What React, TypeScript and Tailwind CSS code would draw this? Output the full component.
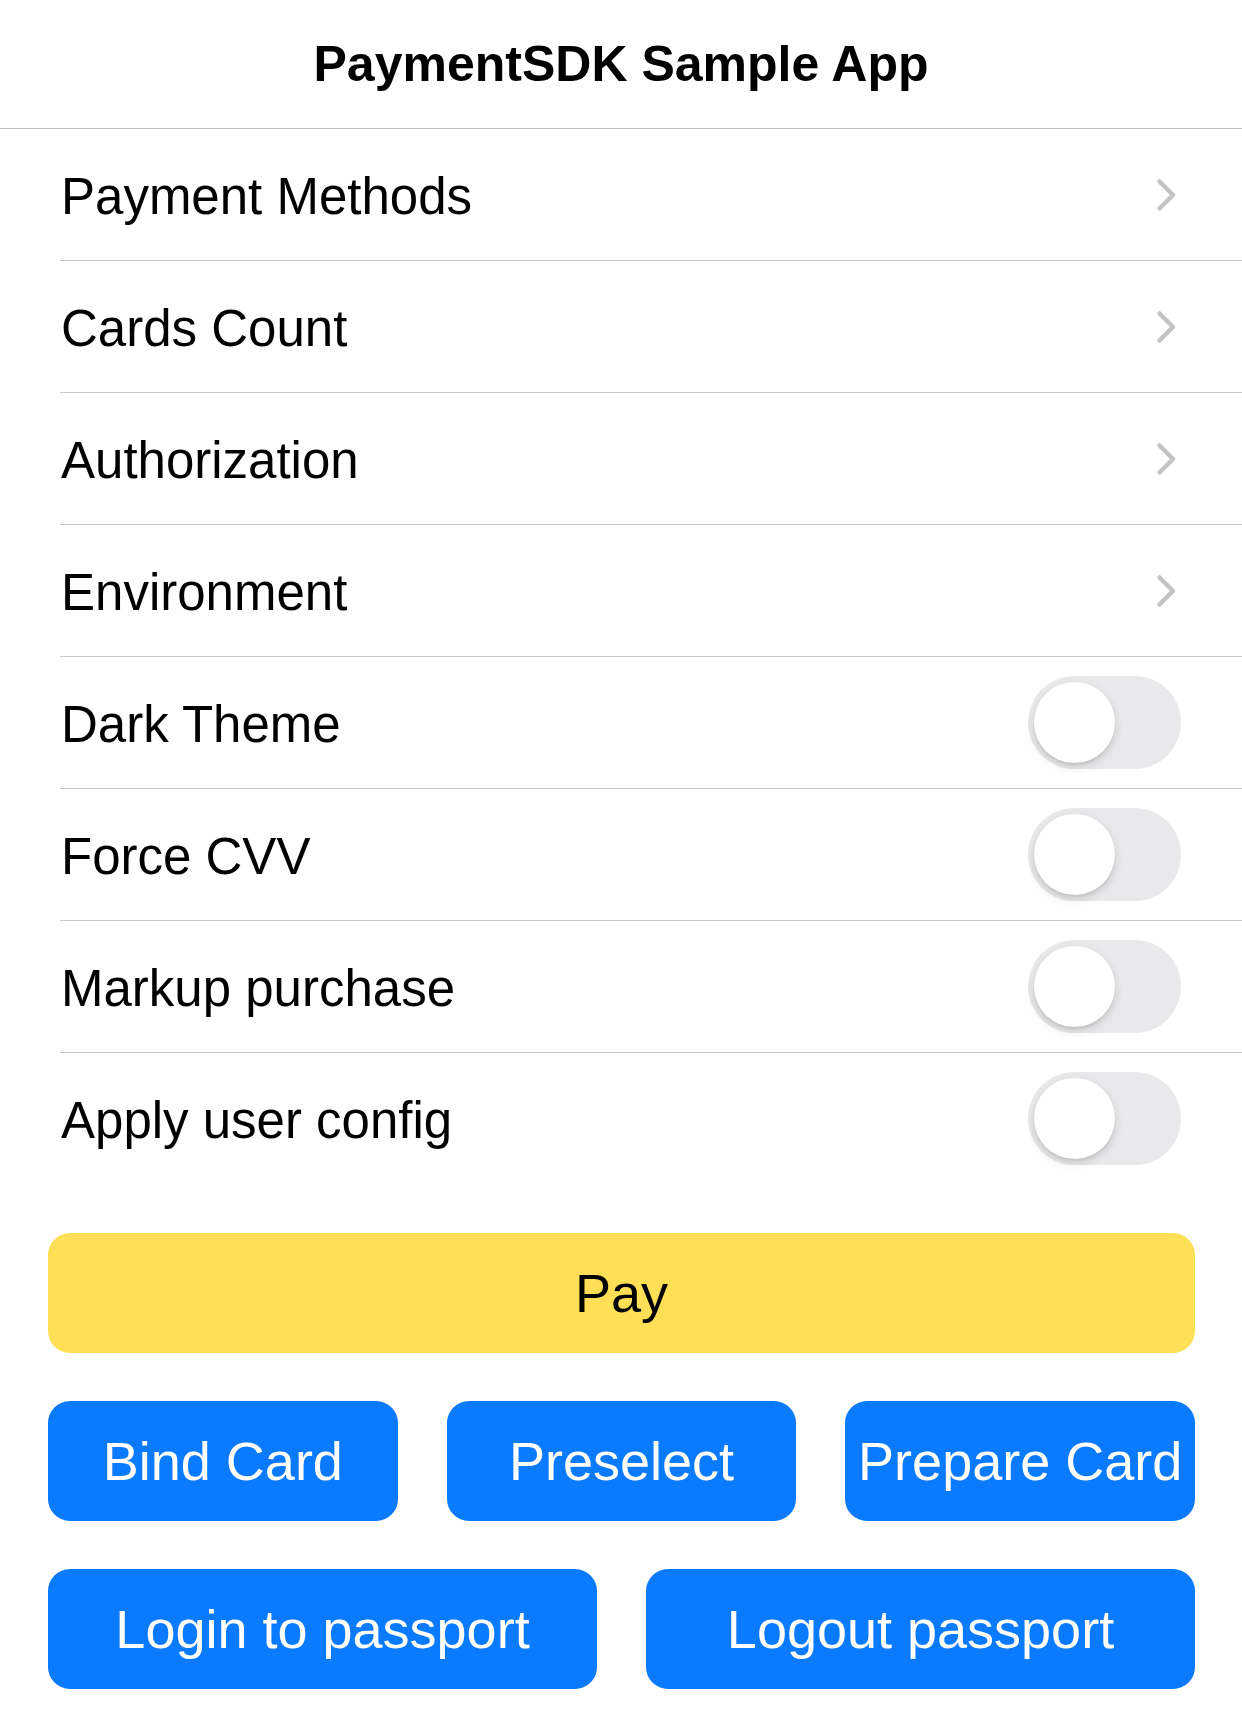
import React from 'react';

const navRows = ['Payment Methods', 'Cards Count', 'Authorization', 'Environment'];
const switchRows = ['Dark Theme', 'Force CVV', 'Markup purchase', 'Apply user config'];

function Chevron() {
  return (
    <svg width="21" height="34" viewBox="0 0 21 34" fill="none" className="mr-[4px]">
      <path d="M3.5 3.5 L17 17 L3.5 30.5" stroke="#c4c4c7" strokeWidth="4.5" strokeLinecap="round" strokeLinejoin="round" />
    </svg>
  );
}

function Toggle() {
  return (
    <div className="w-[153px] h-[93px] rounded-full bg-[#e9e9eb] flex items-center pl-[6px]">
      <div className="w-[81px] h-[81px] rounded-full bg-white shadow-[0_4px_10px_rgba(0,0,0,0.14),0_2px_2px_rgba(0,0,0,0.06)]" />
    </div>
  );
}

function Row({ label, last, children }: { label: string; last?: boolean; children: React.ReactNode }) {
  return (
    <div>
      <div className="h-[131px] flex items-center justify-between pl-[61px] pr-[61px]">
        <span className="text-[51px] leading-none text-black pt-[4px]">{label}</span>
        {children}
      </div>
      {!last && <div className="ml-[60px] h-px bg-[#c8c7cc]" />}
    </div>
  );
}

function Button({ label, className }: { label: string; className?: string }) {
  return (
    <button className={`h-[120px] rounded-[22px] flex items-center justify-center text-[54px] leading-none whitespace-nowrap ${className}`}>
      {label}
    </button>
  );
}

export default function App() {
  return (
    <div className="w-[1242px] min-h-[1728px] bg-white" style={{ fontFamily: '"Liberation Sans", Arial, sans-serif' }}>
      <header className="h-[129px] flex items-center justify-center border-b border-[#bdbdc0]">
        <h1 className="text-[50px] font-bold leading-none text-black">PaymentSDK Sample App</h1>
      </header>

      <div>
        {navRows.map((r) => (
          <Row key={r} label={r}>
            <Chevron />
          </Row>
        ))}
        {switchRows.map((r, i) => (
          <Row key={r} label={r} last={i === switchRows.length - 1}>
            <Toggle />
          </Row>
        ))}
      </div>

      <div className="pl-[48px] pr-[47px] pt-[49px] flex flex-col gap-[48px]">
        <Button label="Pay" className="w-[1147px] bg-[#fedf56] text-black" />
        <div className="flex gap-[49px]">
          <Button label="Bind Card" className="w-[351px] bg-[#0a7aff] text-white" />
          <Button label="Preselect" className="w-[351px] bg-[#0a7aff] text-white" />
          <Button label="Prepare Card" className="w-[351px] bg-[#0a7aff] text-white" />
        </div>
        <div className="flex gap-[49px]">
          <Button label="Login to passport" className="w-[549px] bg-[#0a7aff] text-white" />
          <Button label="Logout passport" className="w-[549px] bg-[#0a7aff] text-white" />
        </div>
      </div>
    </div>
  );
}
